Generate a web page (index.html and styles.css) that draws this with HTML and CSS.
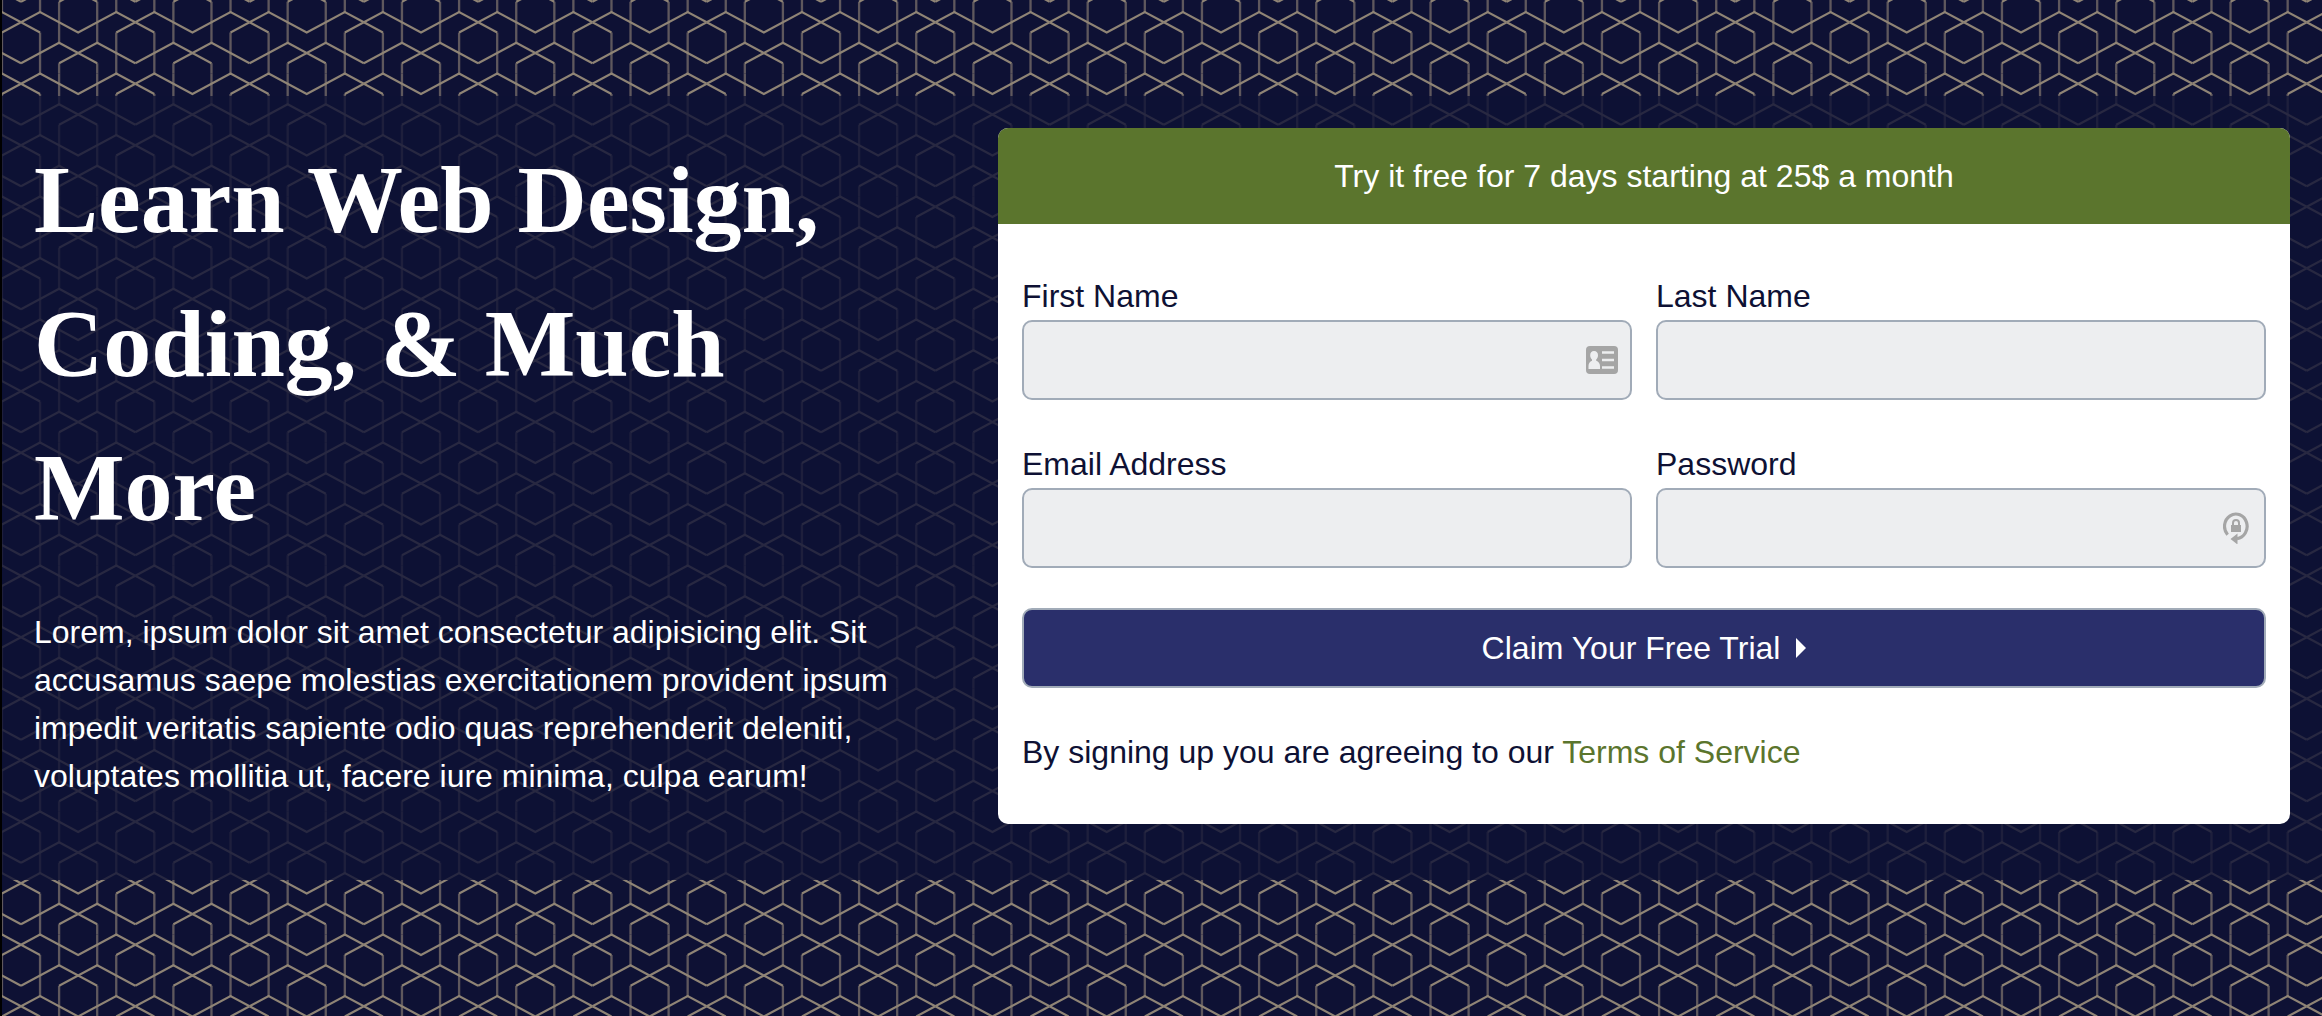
FILE: index.html
```html
<!DOCTYPE html>
<html lang="en">
<head>
<meta charset="utf-8">
<meta name="viewport" content="width=device-width, initial-scale=1">
<title>Learn Web Design</title>
<link rel="stylesheet" href="styles.css">
</head>
<body>
<main class="page">
  <section class="hero">
    <div class="intro">
      <h1 class="intro-title">Learn Web Design, Coding, &amp; Much More</h1>
      <p class="intro-text">Lorem, ipsum dolor sit amet consectetur adipisicing elit. Sit accusamus saepe molestias exercitationem provident ipsum impedit veritatis sapiente odio quas reprehenderit deleniti, voluptates mollitia ut, facere iure minima, culpa earum!</p>
    </div>
    <div class="card">
      <p class="card-header">Try it free for 7 days starting at 25$ a month</p>
      <form class="form">
        <div class="field">
          <label for="first-name">First Name</label>
          <div class="control">
            <input id="first-name" type="text">
            <svg class="field-icon icon-contact" viewBox="0 0 32 28" aria-hidden="true">
              <rect width="32" height="28" rx="4" fill="#a5a5a5"/>
              <path fill="#edeef0" d="M8 5c2.600 0 4 1.800 4 4.300 0 2-.8 3.500-1.800 4.200v1.200c2.300.8 3.800 2.600 3.800 5.300v3H2.500v-3c0-2.700 1.300-4.500 3.500-5.300v-1.200C5 12.800 4.200 11.300 4.200 9.300 4.200 6.800 5.500 5 8 5z"/>
              <path stroke="#edeef0" stroke-width="2.600" d="M16 6.500h12M16 14h12M16 21.500h12"/>
            </svg>
          </div>
        </div>
        <div class="field">
          <label for="last-name">Last Name</label>
          <div class="control"><input id="last-name" type="text"></div>
        </div>
        <div class="field">
          <label for="email">Email Address</label>
          <div class="control"><input id="email" type="email"></div>
        </div>
        <div class="field">
          <label for="password">Password</label>
          <div class="control">
            <input id="password" type="password">
            <svg class="field-icon icon-lock" viewBox="0 0 26 32" aria-hidden="true">
              <path fill="none" stroke="#a5a5a5" stroke-width="3.200" d="M4.600 22.800A11.300 12.300 0 1 1 14 26.600"/>
              <path fill="#a5a5a5" d="M7.500 27l7-5.500V32.500zM8 13h10v7H8z"/>
              <path fill="none" stroke="#a5a5a5" stroke-width="2" d="M10 14v-3a3 3 0 0 1 6 0v3"/>
            </svg>
          </div>
        </div>
        <button class="submit" type="submit">Claim Your Free Trial
          <svg class="caret" viewBox="0 0 10 20" aria-hidden="true"><path fill="#fff" d="M0 0l10 10L0 20z"/></svg>
        </button>
        <p class="terms">By signing up you are agreeing to our <a href="#terms">Terms of Service</a></p>
      </form>
    </div>
  </section>
</main>
</body>
</html>
```
FILE: styles.css
```css
* {
  box-sizing: border-box;
  margin: 0;
}

body {
  background: #000;
  color: #0e1134;
  font: 32px/48px "Liberation Sans", Arial, Helvetica, sans-serif;
}

/* Interlocking hexagon outlines: seven columns by two rows in each tile. */
.page {
  min-height: 100vh;
  margin-left: 2px;
  padding: 96px 0;
  background-color: #0e1134;
  background-image: url("data:image/svg+xml,%3Csvg xmlns='http://www.w3.org/2000/svg' width='800' height='123' viewBox='0 0 800 123' fill='none'%3E%3Cdefs%3E%3Cg id='t'%3E%3Cpath stroke='%235f585d' stroke-width='2.3' d='M19.05 20.5V61.5M95.24 20.5V61.5M38.1 0V30.75M76.19 0V30.75M38.1 51.25V61.5M76.19 51.25V61.5'/%3E%3Cpath stroke='%238f8475' stroke-width='2' d='M0 10.25L19.05 0L57.14 20.5L95.24 0L114.286 10.25M0 10.25L19.05 20.5M114.286 10.25L95.24 20.5M0 51.25L38.1 30.75L76.19 51.25M114.286 51.25L76.19 30.75L38.1 51.25'/%3E%3C/g%3E%3Cg id='r'%3E%3Cuse href='%23t'/%3E%3Cuse href='%23t' x='114.286'/%3E%3Cuse href='%23t' x='228.571'/%3E%3Cuse href='%23t' x='342.857'/%3E%3Cuse href='%23t' x='457.143'/%3E%3Cuse href='%23t' x='571.429'/%3E%3Cuse href='%23t' x='685.714'/%3E%3C/g%3E%3C/defs%3E%3Cuse href='%23r' y='-61.5'/%3E%3Cuse href='%23r'/%3E%3Cuse href='%23r' y='61.5'/%3E%3Cuse href='%23r' y='123'/%3E%3C/svg%3E");
  background-position: 19px 12px;
  background-size: 800px 123px;
}

.hero {
  display: grid;
  grid-template-columns: 225fr 323fr;
  gap: 64px;
  align-items: start;
  padding: 32px;
  background: rgba(14, 17, 52, 0.8);
}

.intro {
  color: #fff;
}

.intro-title {
  font: bold 96px/144px "Liberation Serif", "Times New Roman", serif;
}

.intro-text {
  margin: 48px 0;
}

.card {
  overflow: hidden;
  border-radius: 10px;
  background: #fff;
}

.card-header {
  padding: 24px;
  background: #5b752d;
  color: #fff;
  text-align: center;
}

.form {
  display: grid;
  grid-template-columns: 1fr 1fr;
  gap: 40px 24px;
  padding: 48px 24px;
}

.field label {
  display: block;
}

.control {
  position: relative;
}

.control input {
  display: block;
  width: 100%;
  height: 80px;
  padding: 0 24px;
  border: 2px solid #a1abb8;
  border-radius: 10px;
  background: #edeef0;
  color: inherit;
  font: inherit;
}

.field-icon {
  position: absolute;
}

.icon-contact {
  top: 26px;
  right: 14px;
  width: 32px;
  height: 28px;
}

.icon-lock {
  top: 24px;
  right: 17px;
  width: 26px;
  height: 32px;
}

.submit {
  display: flex;
  grid-column: 1 / -1;
  align-items: center;
  justify-content: center;
  gap: 16px;
  height: 80px;
  border: 2px solid #a1abb8;
  border-radius: 10px;
  background: #2a2f6b;
  color: #fff;
  font: inherit;
}

.caret {
  width: 10px;
  height: 20px;
}

.terms {
  grid-column: 1 / -1;
}

.terms a {
  color: #5b752d;
  text-decoration: none;
}
```
